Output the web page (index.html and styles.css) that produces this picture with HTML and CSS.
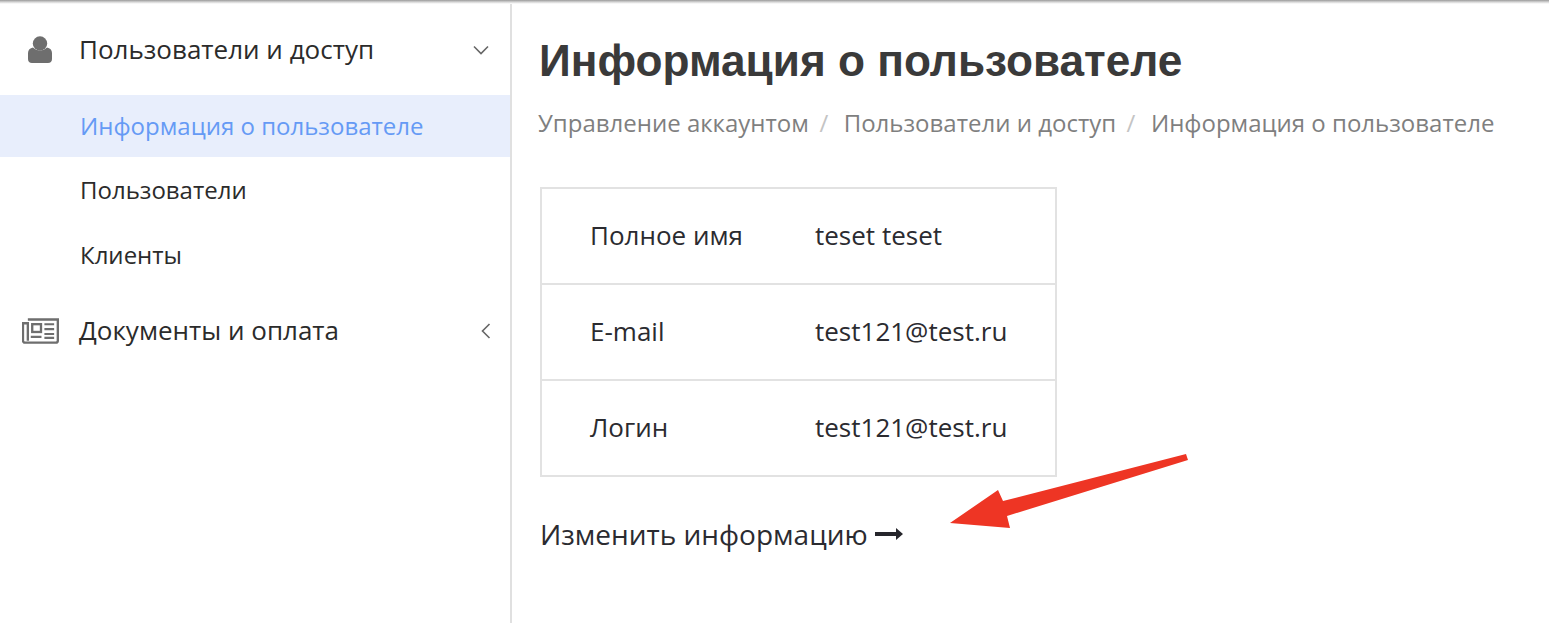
FILE: index.html
```html
<!DOCTYPE html>
<html lang="ru">
<head>
<meta charset="utf-8">
<title>Информация о пользователе</title>
<link rel="stylesheet" href="styles.css">
</head>
<body>
<div class="app">
  <aside class="sidebar">
    <div class="group">
      <svg class="gicon user" viewBox="0 0 24 28"><circle cx="12" cy="7.5" r="7.2" fill="#6e6e6e"/><path d="M0 23v-6c0-3 2-5 5-5.5 2 2 4.500 3 7 3s5-1 7-3c3 .5 5 2.500 5 5.500v6c0 2.500-1.500 4-4 4H4c-2.500 0-4-1.500-4-4z" fill="#6e6e6e"/></svg>
      <span class="glabel">Пользователи и доступ</span>
      <svg class="chev" viewBox="0 0 16 10"><path d="M1 1.500l7 7 7-7" fill="none" stroke="#666" stroke-width="1.600"/></svg>
    </div>
    <a class="sub active">Информация о пользователе</a>
    <a class="sub">Пользователи</a>
    <a class="sub">Клиенты</a>
    <div class="group group-docs">
      <svg class="gicon news" viewBox="0 0 38 26"><g fill="none" stroke="#6e6e6e" stroke-width="2.400"><path d="M6 1.200h30.800V23a2 2 0 0 1-2 2H3a2 2 0 0 1-2-2V5h5v18"/><rect x="10.500" y="6" width="9" height="8"/></g><path d="M23 5h10v2.200H23zM23 10h10v2.200H23zM23 15h10v2.200H23zM9 18h11v2.200H9zM23 19h10v2.200H23z" fill="#6e6e6e"/></svg>
      <span class="glabel">Документы и оплата</span>
      <svg class="chev chev-left" viewBox="0 0 10 16"><path d="M8.500 1l-7 7 7 7" fill="none" stroke="#666" stroke-width="1.600"/></svg>
    </div>
  </aside>
  <main class="content">
    <h1 class="title">Информация о пользователе</h1>
    <nav class="crumbs">
      <span>Управление аккаунтом</span><i>/</i><span>Пользователи и доступ</span><i>/</i><span>Информация о пользователе</span>
    </nav>
    <table class="info">
      <tr><td class="k">Полное имя</td><td>teset teset</td></tr>
      <tr><td class="k">E-mail</td><td>test121@test.ru</td></tr>
      <tr><td class="k">Логин</td><td>test121@test.ru</td></tr>
    </table>
    <a class="edit">Изменить информацию
      <svg class="edit-arrow" viewBox="0 0 28 14"><path d="M0 5h21V1l7 6-7 6V9H0z" fill="#26262c"/></svg>
    </a>
  </main>
</div>
<svg class="annot" viewBox="0 0 1549 623"><path d="M950 523L998 490 1003 501 1186 454 1188 460 1007 516 1010 528z" fill="#ee3524"/></svg>
</body>
</html>
```
FILE: styles.css
```css
* { box-sizing: border-box; }
html, body { margin: 0; height: 100%; background: #fff; overflow: hidden; }
body { font-family: "Open Sans", sans-serif; color: #2b2b30; }
.app {
  display: flex;
  height: 623px;
  position: relative;
}
.app::before {
  content: "";
  position: absolute;
  left: 0; right: 0; top: 0;
  height: 4px;
  background: linear-gradient(#9a9a9a, #cfcfcf 45%, #f4f4f4 85%, #fff);
}
.sidebar {
  width: 512px;
  flex: none;
  border-right: 2px solid #e0e0e0;
  padding-top: 18px;
}
.group {
  display: flex;
  align-items: center;
  height: 64px;
  margin-bottom: 13px;
  position: relative;
}
.group-docs { margin-top: 12px; }
.gicon { flex: none; display: block; }
.user { width: 24px; height: 28px; margin-left: 28px; margin-right: 27px; }
.news { width: 37px; height: 26px; margin-left: 22px; margin-right: 20px; }
.glabel { font-size: 26px; line-height: 32px; flex: 1; color: #2b2b2b; padding-bottom: 2px; }
.chev { width: 16px; height: 10px; margin-right: 21px; flex: none; }
.chev-left { width: 10px; height: 16px; margin-right: 19px; }
.sub {
  display: flex;
  align-items: center;
  height: 62px;
  padding-left: 80px;
  padding-bottom: 3px;
  margin-bottom: 3px;
  font-size: 24px;
  color: #2b2b2b;
}
.sub.active { background: #e8eefc; color: #659af5; padding-bottom: 1px; }
.content { flex: 1; padding: 0 0 0 26px; }
.title {
  font-family: "Liberation Sans", sans-serif;
  font-weight: 700;
  font-size: 44.2px;
  line-height: 50px;
  margin: 36px 0 0 1px;
  color: #3a3a3a;
}
.crumbs {
  margin-top: 21px;
  font-size: 24px;
  line-height: 32px;
  color: #7f7f7f;
  white-space: nowrap;
}
.crumbs i { font-style: normal; color: #c4c4c4; margin: 0 15.500px 0 10.500px; }
.info {
  margin: 48px 0 0 2px;
  border-collapse: collapse;
  border: 2px solid #e2e2e2;
  width: 517px;
  font-size: 26px;
}
.info td { height: 96px; padding: 0 0 2px; border-top: 2px solid #e2e2e2; color: #2b2b30; }
.info td.k { width: 274px; padding-left: 48px; }
.edit {
  display: flex;
  align-items: center;
  gap: 7px;
  margin: 39px 0 0 2px;
  font-size: 28px;
  line-height: 36px;
  color: #2b2b30;
}
.edit-arrow { width: 28px; height: 14px; flex: none; }
.annot {
  position: absolute;
  left: 0; top: 0;
  width: 1549px;
  height: 623px;
  pointer-events: none;
}
```
